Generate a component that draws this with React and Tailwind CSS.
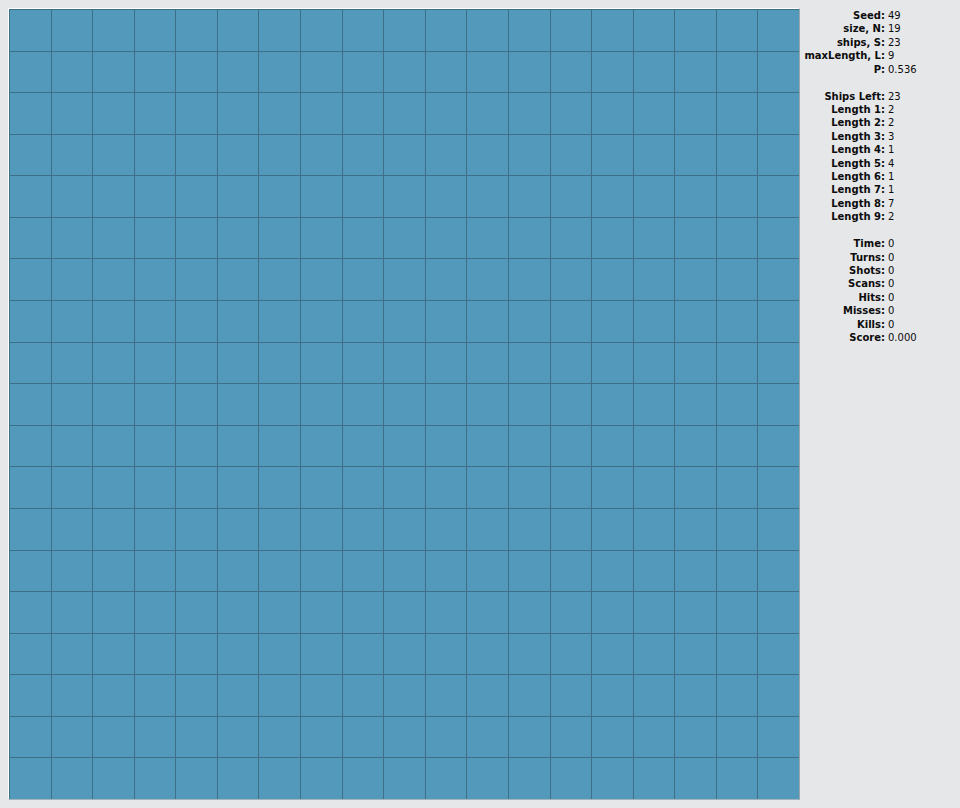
import React from "react";

const stats1 = [
  ["Seed:", "49"],
  ["size, N:", "19"],
  ["ships, S:", "23"],
  ["maxLength, L:", "9"],
  ["P:", "0.536"],
];
const stats2 = [
  ["Ships Left:", "23"],
  ["Length 1:", "2"],
  ["Length 2:", "2"],
  ["Length 3:", "3"],
  ["Length 4:", "1"],
  ["Length 5:", "4"],
  ["Length 6:", "1"],
  ["Length 7:", "1"],
  ["Length 8:", "7"],
  ["Length 9:", "2"],
];
const stats3 = [
  ["Time:", "0"],
  ["Turns:", "0"],
  ["Shots:", "0"],
  ["Scans:", "0"],
  ["Hits:", "0"],
  ["Misses:", "0"],
  ["Kills:", "0"],
  ["Score:", "0.000"],
];

function Rows({ rows }) {
  return rows.map(([k, v]) => (
    <React.Fragment key={k}>
      <div className="text-right font-bold whitespace-nowrap">{k}</div>
      <div className="whitespace-nowrap">{v}</div>
    </React.Fragment>
  ));
}

export default function App() {
  const cells = Array.from({ length: 19 * 19 });
  return (
    <div
      className="w-[960px] h-[808px] bg-[#e6e7e9] flex items-start p-2 overflow-hidden"
      style={{ fontFamily: '"DejaVu Sans", sans-serif' }}
    >
      <div className="shrink-0 border-t border-l border-t-white border-l-white border-r border-b border-r-[#9aa6ad] border-b-[#a3b3bb]">
        <div className="w-[790px] h-[790px] grid grid-cols-[repeat(19,minmax(0,1fr))] grid-rows-[repeat(19,minmax(0,1fr))] bg-[#5399bb]">
          {cells.map((_, i) => (
            <div key={i} className="border-l border-t border-[#3e6f87]" />
          ))}
        </div>
      </div>
      <div className="grid grid-cols-[86px_auto] gap-x-[3px] text-[10px] leading-[13.42px] text-[#0c0c0c] pt-[1px] -ml-[1px]">
        <Rows rows={stats1} />
        <div className="h-[13.42px] col-span-2" />
        <Rows rows={stats2} />
        <div className="h-[13.42px] col-span-2" />
        <Rows rows={stats3} />
      </div>
    </div>
  );
}
